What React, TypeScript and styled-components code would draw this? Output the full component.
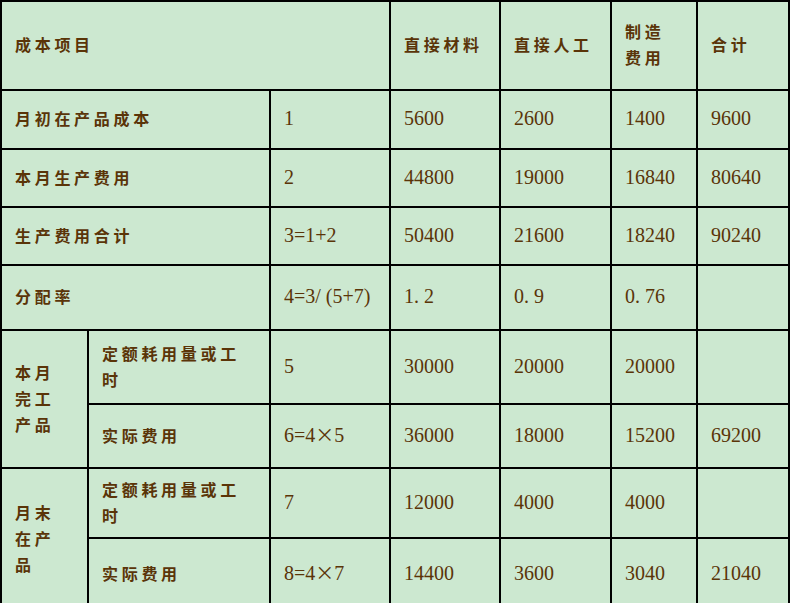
import React from 'react';
import styled, { createGlobalStyle } from 'styled-components';

const GlobalStyle = createGlobalStyle`
  html, body {
    margin: 0;
    padding: 0;
    background: #cce8d0;
    overflow: hidden;
  }
`;

const columnWidths = [87, 182, 120, 110, 111, 86, 92];

const Table = styled.table`
  border-collapse: collapse;
  table-layout: fixed;
  width: 788px;
  background: #cce8d0;
  color: #5a3408;
`;

const Row = styled.tr<{ $h: number }>`
  height: ${(p) => p.$h}px;
`;

const Cell = styled.td<{ $label?: boolean; $wrap?: boolean }>`
  border: 2px solid #000;
  padding: 0 18px 3px 13px;
  vertical-align: middle;
  text-align: left;
  white-space: ${(p) => (p.$wrap ? 'normal' : 'nowrap')};
  font-family: ${(p) =>
    p.$label
      ? '"Noto Sans CJK SC", "Noto Sans", sans-serif'
      : '"Liberation Serif", "Noto Sans CJK SC", serif'};
  font-weight: ${(p) => (p.$label ? 700 : 400)};
  font-size: ${(p) => (p.$label ? '16px' : '20px')};
  letter-spacing: ${(p) => (p.$label ? '3.7px' : '0')};
  line-height: ${(p) => (p.$label ? '26px' : '24px')};
`;

const Wide = styled.span`
  font-family: "Noto Sans CJK SC", sans-serif;
  font-size: 19px;
`;

type Line = {
  h: number;
  label?: string;
  group?: React.ReactNode;
  groupRows?: number;
  sub?: string;
  code: React.ReactNode;
  values: string[];
};

const times = <Wide>×</Wide>;

const lines: Line[] = [
  { h: 59, label: '月初在产品成本', code: '1', values: ['5600', '2600', '1400', '9600'] },
  { h: 58, label: '本月生产费用', code: '2', values: ['44800', '19000', '16840', '80640'] },
  { h: 58, label: '生产费用合计', code: '3=1+2', values: ['50400', '21600', '18240', '90240'] },
  { h: 65, label: '分配率', code: '4=3/ (5+7)', values: ['1. 2', '0. 9', '0. 76', ''] },
  {
    h: 74,
    group: (
      <>
        本月<br />完工<br />产品
      </>
    ),
    groupRows: 2,
    sub: '定额耗用量或工时',
    code: '5',
    values: ['30000', '20000', '20000', ''],
  },
  { h: 64, sub: '实际费用', code: <>6=4{times}5</>, values: ['36000', '18000', '15200', '69200'] },
  {
    h: 70,
    group: (
      <>
        月末<br />在产<br />品
      </>
    ),
    groupRows: 2,
    sub: '定额耗用量或工时',
    code: '7',
    values: ['12000', '4000', '4000', ''],
  },
  { h: 72, sub: '实际费用', code: <>8=4{times}7</>, values: ['14400', '3600', '3040', '21040'] },
];

export default function App() {
  return (
    <>
      <GlobalStyle />
      <Table>
        <colgroup>
          {columnWidths.map((w, i) => (
            <col key={i} style={{ width: w }} />
          ))}
        </colgroup>
        <tbody>
          <Row $h={89}>
            <Cell $label colSpan={3}>成本项目</Cell>
            <Cell $label>直接材料</Cell>
            <Cell $label>直接人工</Cell>
            <Cell $label>
              制造<br />费用
            </Cell>
            <Cell $label>合计</Cell>
          </Row>
          {lines.map((line, i) => (
            <Row key={i} $h={line.h}>
              {line.label && (
                <Cell $label colSpan={2}>
                  {line.label}
                </Cell>
              )}
              {line.group && (
                <Cell $label rowSpan={line.groupRows}>
                  {line.group}
                </Cell>
              )}
              {line.sub && (
                <Cell $label $wrap>
                  {line.sub}
                </Cell>
              )}
              <Cell>{line.code}</Cell>
              {line.values.map((v, j) => (
                <Cell key={j}>{v}</Cell>
              ))}
            </Row>
          ))}
        </tbody>
      </Table>
    </>
  );
}
